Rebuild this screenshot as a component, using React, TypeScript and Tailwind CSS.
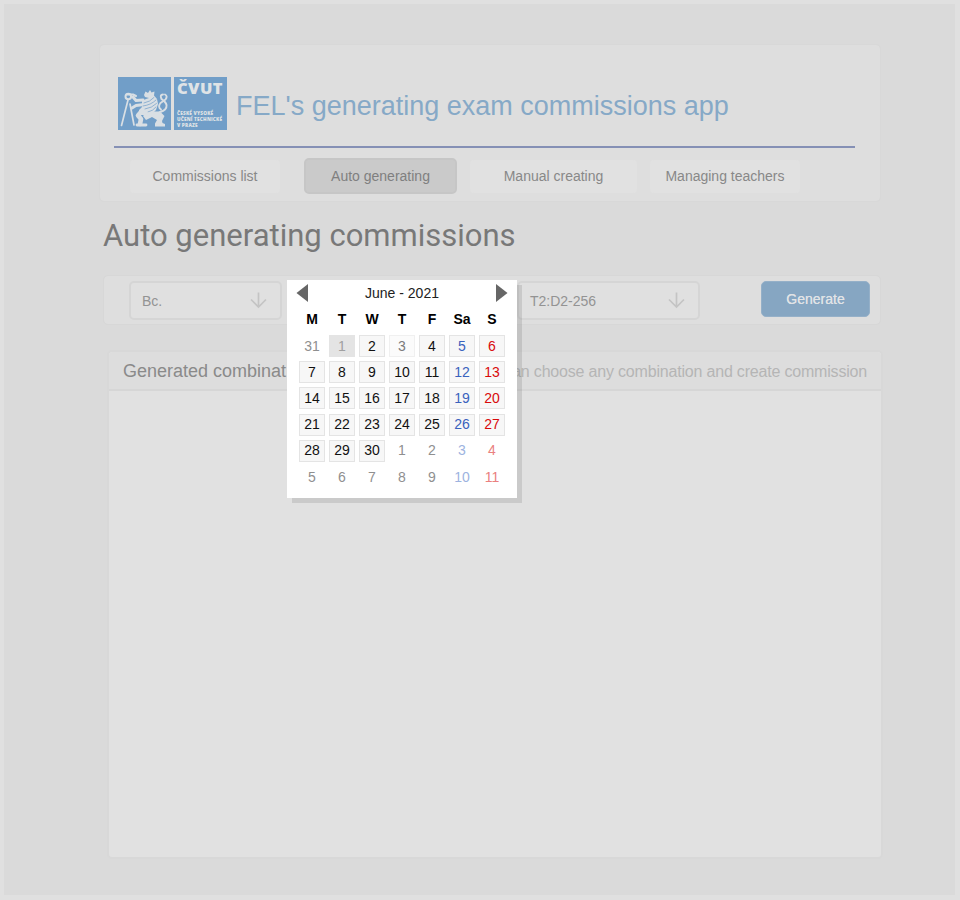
const sans = "font-['Liberation_Sans',Arial,sans-serif]";

type Day = { n: number; tone: string; box: string };

const BOX = "bg-[#f7f7f7] border-[#e4e4e4]";
const NONE = "bg-transparent border-transparent";

function buildDays(): Day[] {
  const numbers = [31, ...Array.from({ length: 30 }, (_, i) => i + 1), ...Array.from({ length: 11 }, (_, i) => i + 1)];
  return numbers.map((n, i) => {
    const outside = i === 0 || i > 30;
    const col = i % 7;
    let tone = outside ? "text-[#8f8f8f]" : "text-[#111111]";
    if (col === 5) tone = outside ? "text-[#9db3e0]" : "text-[#3a62bd]";
    if (col === 6) tone = outside ? "text-[#ea8080]" : "text-[#d90a0a]";
    let box = outside ? NONE : BOX;
    if (i === 1) {
      tone = "text-[#a0a0a0]";
      box = "bg-[#e4e4e4] border-[#e4e4e4]";
    }
    if (i === 3) {
      tone = "text-[#7c7c7c]";
      box = "bg-[#fbfbfb] border-[#f0f0f0]";
    }
    return { n, tone, box };
  });
}

function Logo() {
  return (
    <div className="flex h-[53px] w-[109px] shrink-0 gap-[3px] text-[#dfe3e6]">
      <div className="h-[53px] w-[53px] bg-[#719ec8]">
        <svg width="53" height="53" viewBox="0 0 53 53" fill="none" stroke="#d9dfe4" strokeLinecap="round" strokeLinejoin="round">
          <path d="M10 23 L3.5 48.5" strokeWidth="1.7" />
          <path d="M12 27 L16 48" strokeWidth="1.7" />
          <circle cx="10.3" cy="19.5" r="2.8" strokeWidth="2" />
          <path d="M9 17.5 L15 17.5 L18 19" strokeWidth="2" />
          <path d="M15 20 L18 23.5 L25 23" strokeWidth="3" />
          <path d="M14 31 L18 28.5 L26 27.5" strokeWidth="3" />
          <path d="M26 18 L27.5 14.5 L30 16 L32 13 L33.5 15.5 L36.5 14.5 L36 18.5 L39 22 L40 27 L38 33 L34 37 L27 38 L21 38 L21 33 L24 30 L24 24 L28 22 L31 21 L27 20 Z" fill="#d9dfe4" stroke="none" />
          <path d="M26 26 Q32 25 36 20.5 M25 29 Q33 28 38 23 M27 32 Q34 31 38.5 26.5 M30 35 Q35 34 38 30" stroke="#719ec8" strokeWidth=".7" />
          <path d="M23 35 L20 38.5 L23 42 L22 47" strokeWidth="4.6" />
          <path d="M19 48 H28" strokeWidth="2.8" />
          <path d="M28 35.5 H43 L46.5 39 L44 44 L44.5 46 L47 47 V49.5 H37 V46.5 L39 43 L34 40 L28 43 L25 39 Z" fill="#d9dfe4" stroke="none" />
          <path d="M40 38 L36 35.5 Q43 36 47 32.5 Q50.5 28.5 46.5 24.5 L43.5 22 Q41.5 17.5 45 17.5 M47 17.5 Q50 19 47.5 22.5 L42.5 26 Q39.5 30 43 32.5" strokeWidth="1.9" />
        </svg>
      </div>
      <div className="flex h-[53px] w-[53px] flex-col bg-[#719ec8] pl-[3px] font-['Open_Sans',sans-serif] font-extrabold">
        <span className="h-[22px] text-[16.5px] leading-[22px] tracking-[0.4px]">ČVUT</span>
        <span className="mt-[11px] whitespace-nowrap text-[4.7px] leading-[6px] tracking-[0.2px]">
          ČESKÉ VYSOKÉ
          <br />
          UČENÍ TECHNICKÉ
          <br />V PRAZE
        </span>
      </div>
    </div>
  );
}

function DownArrow() {
  return (
    <svg width="18" height="18" viewBox="0 0 18 18" fill="none" stroke="#c4c4c4" strokeWidth="1.7">
      <path d="M8.5 0.5 V15 M1 7.5 L8.5 15 L16 7.5" />
    </svg>
  );
}

function Select({ label, box }: { label: string; box: string }) {
  return (
    <div className={`flex h-[39px] items-center justify-between rounded-[5px] border-2 border-[#d5d5d5] bg-[#e0e0e0] pl-[11px] pr-[12px] text-[14px] text-[#939393] ${box}`}>
      <span className="mt-[2px]">{label}</span>
      <DownArrow />
    </div>
  );
}

function Calendar() {
  return (
    <div className="absolute left-[287px] top-[280px] h-[218px] w-[230px] bg-white shadow-[5px_5px_0_rgba(0,0,0,0.1)]">
      <div className="flex h-[26px] items-center justify-between pl-[9px] pr-[9px]">
        <svg width="12" height="18" viewBox="0 0 12 18">
          <path d="M12 0 V18 L0.5 9 Z" fill="#666666" />
        </svg>
        <span className="text-[14px] text-[#222222]">June - 2021</span>
        <svg width="12" height="18" viewBox="0 0 12 18">
          <path d="M0 0 V18 L11.5 9 Z" fill="#666666" />
        </svg>
      </div>
      <div className="grid grid-cols-7 pl-[10px] pr-[10px] text-center text-[14px] font-bold leading-[26px] text-black">
        {["M", "T", "W", "T", "F", "Sa", "S"].map((d, i) => (
          <span key={i}>{d}</span>
        ))}
      </div>
      <div className="mt-[1px] grid grid-cols-7 pl-[10px] pr-[10px]">
        {buildDays().map((d, i) => (
          <div key={i} className="flex h-[26.2px] items-center pl-[2px]">
            <div className={`flex h-[22px] w-[26px] items-center justify-center border text-[14px] ${d.box} ${d.tone}`}>{d.n}</div>
          </div>
        ))}
      </div>
    </div>
  );
}

export default function App() {
  return (
    <div className={`relative h-[900px] w-[960px] overflow-hidden bg-[#e0e0e0] pl-[4px] pt-[4px] ${sans}`}>
      <div className="h-[891px] w-[951px] bg-[#dadada] pt-[40px]">
        <header className="ml-[95px] h-[158px] w-[782px] rounded-[5px] border border-[#d8d8d8] bg-[#dedede] pl-[14px] pt-[32px]">
          <div className="flex h-[53px] items-center pl-[4px]">
            <Logo />
            <h1 className="ml-[9px] mt-[4px] whitespace-nowrap text-[27px] leading-[32px] text-[#86a9c7]">FEL's generating exam commissions app</h1>
          </div>
          <div className="mt-[16px] h-[2px] w-[741px] bg-[#8590b5]" />
          <nav className="mt-[10px] flex items-center text-center text-[14px] leading-[33px] text-[#888888]">
            <a className="ml-[16px] h-[33px] w-[150px] rounded-[4px] bg-[#e1e1e1]">Commissions list</a>
            <a className="ml-[24px] h-[36px] w-[153px] rounded-[5px] border-2 border-[#c6c6c6] bg-[#cacaca] leading-[33px] text-[#7f7f7f]">Auto generating</a>
            <a className="ml-[13px] h-[33px] w-[167px] rounded-[4px] bg-[#e1e1e1]">Manual creating</a>
            <a className="ml-[13px] h-[33px] w-[150px] rounded-[4px] bg-[#e1e1e1]">Managing teachers</a>
          </nav>
        </header>
        <h2 className="ml-[99px] mt-[14px] h-[39px] whitespace-nowrap font-[Roboto,sans-serif] text-[31px] font-normal leading-[40px] text-[#787878]">Auto generating commissions</h2>
        <section className="ml-[99px] mt-[20px] flex h-[50px] w-[778px] items-start rounded-[5px] border border-[#d7d7d7] bg-[#dedede] pl-[25px] pt-[5px]">
          <Select label="Bc." box="w-[153px]" />
          <Select label="T2:D2-256" box="ml-[235px] w-[183px]" />
          <button className="ml-[61px] h-[36px] w-[109px] rounded-[5px] border border-[#95b0c8] bg-[#86a6c2] text-[14px] text-[#e0e3e6] [text-shadow:0_0_0.5px_#e0e3e6]">Generate</button>
        </section>
        <section className="ml-[103px] mt-[25px] h-[509px] w-[776px] overflow-hidden rounded-[5px] border-2 border-[#d8d8d8] bg-[#e1e1e1]">
          <div className="flex h-[39px] items-center justify-between border-b-2 border-[#d6d6d6] bg-[#dddddd] pl-[14px] pr-[14px] pt-[2px]">
            <span className="text-[18px] text-[#8a8a8a]">Generated combinat</span>
            <span className="text-[16px] tracking-[-0.19px] text-[#b5b5b5]">an choose any combination and create commission</span>
          </div>
        </section>
      </div>
      <Calendar />
    </div>
  );
}
